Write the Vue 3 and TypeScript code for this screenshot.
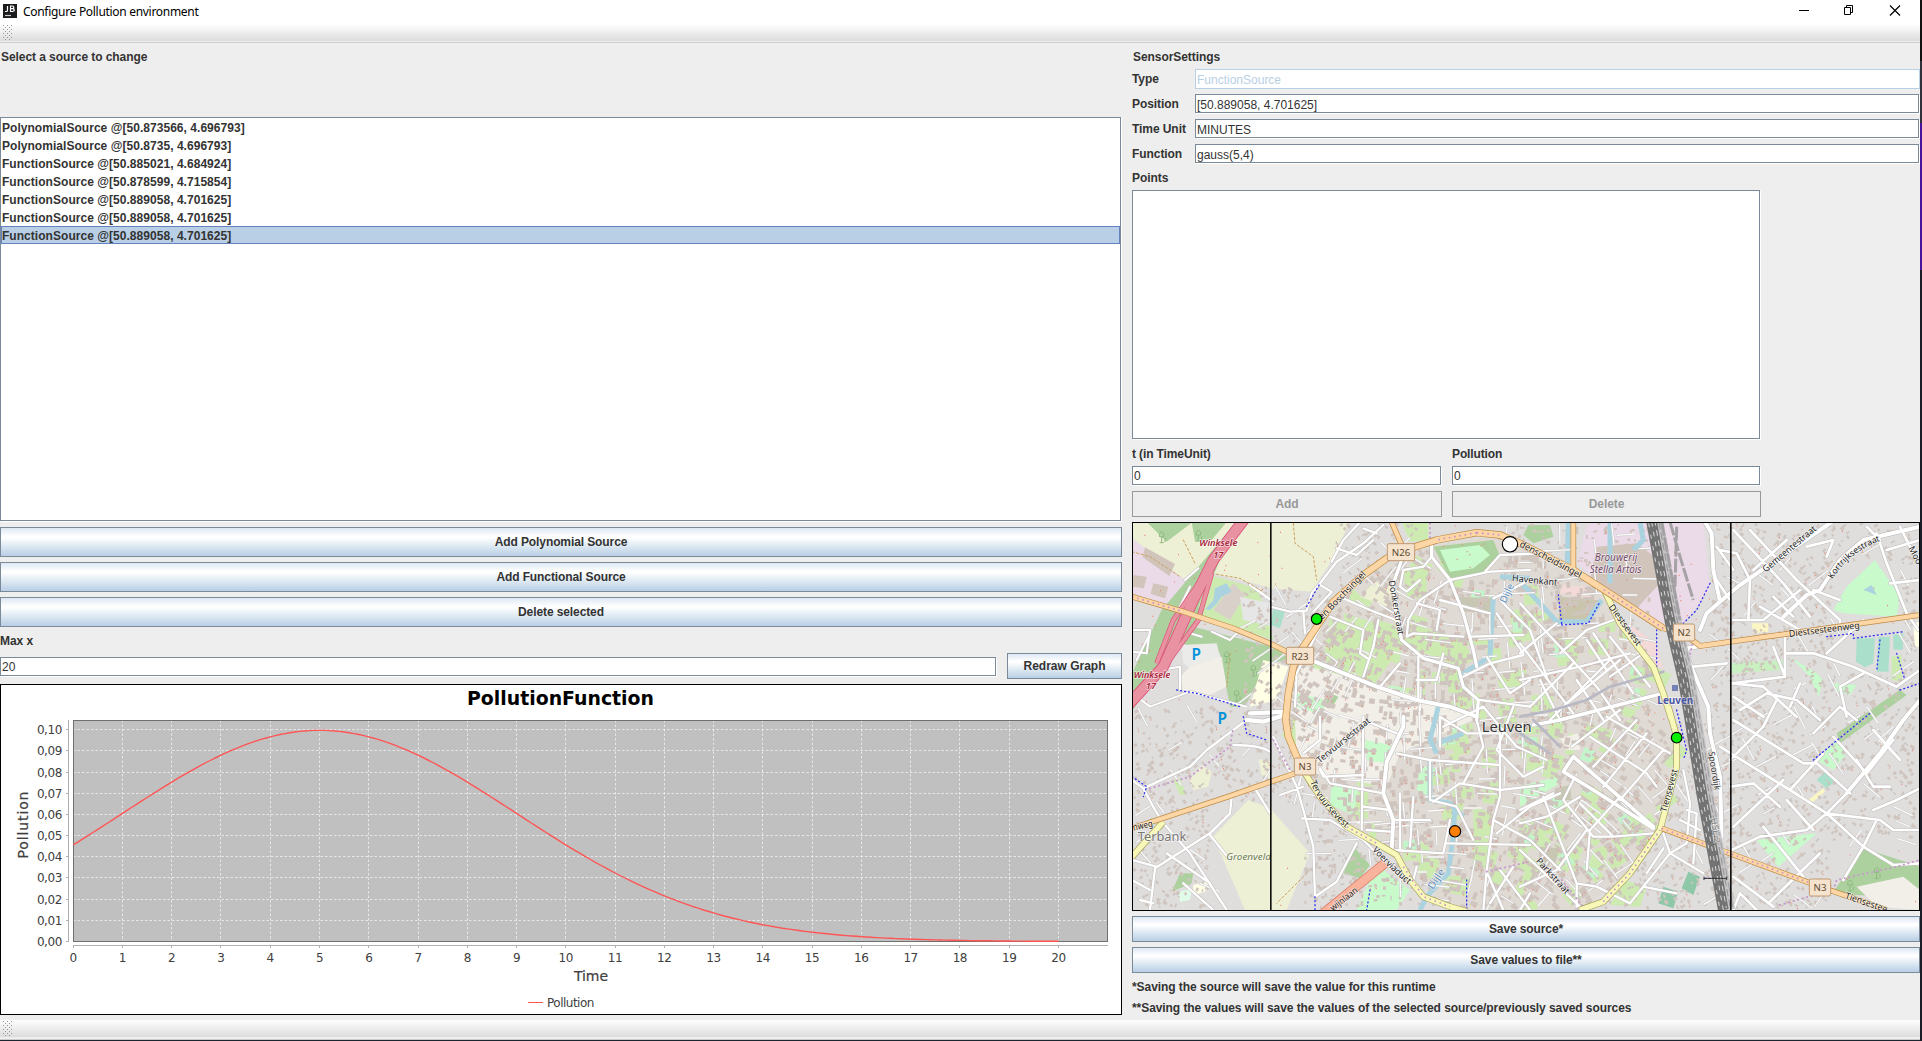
<script setup lang="ts">
interface Area { fill: string; pts: string }
interface Street { d: string; w: number }
interface Label { text: string; x: number; y: number; rot?: number; size: number; fill: string; kind?: string; len?: number }
interface Shield { text: string; x: number; y: number; w: number }

const sources: string[] = [
  'PolynomialSource @[50.873566, 4.696793]',
  'PolynomialSource @[50.8735, 4.696793]',
  'FunctionSource @[50.885021, 4.684924]',
  'FunctionSource @[50.878599, 4.715854]',
  'FunctionSource @[50.889058, 4.701625]',
  'FunctionSource @[50.889058, 4.701625]',
  'FunctionSource @[50.889058, 4.701625]',
]
const selected = 6
const sourceButtons = ['Add Polynomial Source', 'Add Functional Source', 'Delete selected']
const fields = [
  { label: 'Type', value: 'FunctionSource', disabled: true },
  { label: 'Position', value: '[50.889058, 4.701625]', disabled: false },
  { label: 'Time Unit', value: 'MINUTES', disabled: false },
  { label: 'Function', value: 'gauss(5,4)', disabled: false },
]

/* toolbar grip: staggered single-pixel dots */
let gripDots = ''
for (let r = 0; r < 8; r++) {
  for (let c = 0; c < 3; c++) {
    const x = c * 4 + (r % 2) * 2
    if (x < 10) gripDots += `M${x} ${r * 2}h1v1h-1z`
  }
}

/* chart */
const px = (t: number): number => 73.2 + t * 49.26
const py = (p: number): number => 257.5 - p * 2117
const xTicks = Array.from({ length: 21 }, (_, i) => i)
const yTicks = Array.from({ length: 11 }, (_, i) => i)
const snap = (n: number): number => Math.floor(n) + 0.5
const gauss = (t: number): number => Math.exp(-((t - 5) ** 2) / 32) / (4 * Math.sqrt(2 * Math.PI))
const curve = Array.from({ length: 201 }, (_, i) => `${px(i / 10).toFixed(1)},${py(gauss(i / 10)).toFixed(1)}`).join(' ')
const yLabel = (i: number): string => (i / 100).toFixed(2).replace('.', ',')

/* map: three units per pixel */
const areas: Area[] = [
  { fill: '#eef0d5', pts: '6,6 660,6 600,130 545,215 420,205 370,190 245,160 165,180 6,55' },
  { fill: '#add19e', pts: '50,6 188,6 110,65' },
  { fill: '#add19e', pts: '185,6 290,6 245,60 195,65' },
  { fill: '#ebdbe8', pts: '6,55 165,180 130,270 60,255 6,235' },
  { fill: '#d0c4bb', pts: '45,82 135,132 118,168 38,112' },
  { fill: '#d0c4bb', pts: '10,165 50,170 42,205 8,200' },
  { fill: '#d0c4bb', pts: '70,190 115,200 105,235 62,222' },
  { fill: '#add19e', pts: '320,6 205,140 95,270 6,460 6,575 80,460 190,320 240,190' },
  { fill: '#cdebb0', pts: '240,165 380,205 400,250 430,360 215,290 205,260' },
  { fill: '#d9d0c9', pts: '310,190 345,225 300,300 250,270' },
  { fill: '#aad3df', pts: '255,205 290,190 305,215 275,230 262,250 240,270 225,268 250,240' },
  { fill: '#e7e6e6', pts: '330,230 420,250 430,320 340,300' },
  { fill: '#aadfca', pts: '430,262 465,275 450,325 422,315' },
  { fill: '#add19e', pts: '190,320 440,385 480,420 410,430 345,560 300,560 270,400 150,370' },
  { fill: '#ebebe9', pts: '155,375 260,370 275,430 200,460 160,430' },
  { fill: '#f2efe9', pts: '180,440 275,410 290,500 230,530 160,520 150,470' },
  { fill: '#ffffe5', pts: '400,420 475,440 440,540 360,560' },
  { fill: '#f2efe9', pts: '490,430 740,490 1050,590 810,700 770,800 500,750' },
  { fill: '#cdebb0', pts: '600,290 690,320 745,300 840,330 800,400 735,490 580,420' },
  { fill: '#cdebb0', pts: '815,6 895,6 895,60 840,65' },
  { fill: '#cdebb0', pts: '840,310 1000,360 1030,420 990,440 860,390' },
  { fill: '#add19e', pts: '910,80 1090,60 1110,110 1060,160 960,175' },
  { fill: '#c8facc', pts: '930,90 1050,75 1080,105 1030,145 960,155' },
  { fill: '#eef0d5', pts: '735,185 790,200 770,260 690,230' },
  { fill: '#cdebb0', pts: '820,140 890,170 890,230 830,230' },
  { fill: '#cdebb0', pts: '640,280 740,310 720,370 650,330' },
  { fill: '#c7c7b4', pts: '980,230 1090,235 1080,275 990,275' },
  { fill: '#c8facc', pts: '500,520 590,540 575,585 500,560' },
  { fill: '#add19e', pts: '600,520 625,530 605,565 585,555' },
  { fill: '#c8facc', pts: '705,660 785,675 770,730 705,720' },
  { fill: '#c8facc', pts: '605,795 685,810 670,885 600,855' },
  { fill: '#cdebb0', pts: '1030,860 1090,880 1080,1040 1030,1050' },
  { fill: '#c8facc', pts: '870,740 905,740 900,830 860,810' },
  { fill: '#cdebb0', pts: '860,1010 930,1010 920,1080 870,1070' },
  { fill: '#add19e', pts: '675,985 720,1035 690,1075 640,1060' },
  { fill: '#add19e', pts: '150,1060 190,1060 185,1090 125,1115' },
  { fill: '#e0fbe7', pts: '145,1115 185,1108 180,1140 150,1145' },
  { fill: '#ffffe5', pts: '190,1095 235,1085 225,1115 190,1125' },
  { fill: '#eef0d5', pts: '250,950 355,840 420,865 540,1000 470,1170 345,1170' },
  { fill: '#eef0d5', pts: '180,780 215,735 245,755 235,800 190,810' },
  { fill: '#eef0d5', pts: '385,718 420,722 420,775 395,765' },
  { fill: '#cdebb0', pts: '130,780 150,775 168,825 150,825' },
  { fill: '#c8facc', pts: '760,1050 840,1110 800,1170 680,1170 720,1080' },
  { fill: '#ebdbe8', pts: '1375,6 1720,6 1740,210 1660,310 1600,320 1420,200 1340,130' },
  { fill: '#d0c4bb', pts: '1400,80 1520,70 1580,115 1590,190 1520,265 1380,180' },
  { fill: '#add19e', pts: '1195,15 1260,15 1270,50 1210,70 1180,45' },
  { fill: '#c8c5ac', pts: '1290,230 1405,240 1370,310 1285,310' },
  { fill: '#f3d9d8', pts: '1300,195 1370,200 1400,240 1290,220' },
  { fill: '#f3d9d8', pts: '1450,280 1580,370 1600,450 1570,430 1490,340' },
  { fill: '#c8facc', pts: '2110,270 2150,200 2235,120 2280,185 2310,230 2300,290 2140,280' },
  { fill: '#aad3df', pts: '2200,210 2225,195 2240,225 2215,215' },
  { fill: '#aae0cb', pts: '2180,355 2235,355 2230,430 2205,442 2178,425' },
  { fill: '#aae0cb', pts: '2245,350 2280,350 2275,455 2240,455' },
  { fill: '#aae0cb', pts: '2290,345 2320,340 2318,390 2290,388' },
  { fill: '#cdebb0', pts: '2285,410 2315,405 2315,485 2285,480' },
  { fill: '#c8f0c0', pts: '1805,430 1960,420 1955,450 1805,460' },
  { fill: '#add19e', pts: '2120,640 2310,510 2330,525 2130,670' },
  { fill: '#c8facc', pts: '1980,410 2060,460 2080,480 2065,530 2040,470' },
  { fill: '#c8facc', pts: '2110,490 2180,495 2160,525 2125,515' },
  { fill: '#c8facc', pts: '2060,720 2120,660 2150,700 2110,750' },
  { fill: '#aae0cb', pts: '2060,780 2085,753 2120,780 2090,805' },
  { fill: '#fbf6c4', pts: '2035,840 2080,805 2085,815 2050,845' },
  { fill: '#c8facc', pts: '1880,960 2060,940 1945,1040' },
  { fill: '#add19e', pts: '2110,1115 2200,985 2370,1040 2370,1130 2170,1125' },
  { fill: '#f2efe9', pts: '2180,1100 2320,1070 2370,1110 2370,1170 2240,1160' },
  { fill: '#fbf6c4', pts: '1865,310 1915,310 1915,335 1870,340' },
  { fill: '#ffffe5', pts: '2350,310 2370,305 2370,380 2355,380' },
  { fill: '#cdebb0', pts: '1480,1080 1550,1100 1530,1160 1440,1155' },
  { fill: '#cdebb0', pts: '1390,990 1440,970 1420,1050 1375,1040' },
  { fill: '#8ec8a8', pts: '1675,1055 1710,1070 1690,1125 1655,1105' },
  { fill: '#8ec8a8', pts: '1600,1100 1645,1115 1630,1165 1585,1150' },
  { fill: '#f2efe9', pts: '1290,655 1345,640 1350,690 1310,690' },
  { fill: '#c8facc', pts: '1170,800 1280,770 1290,790 1170,860' },
  { fill: '#c7c7b4', pts: '1275,805 1320,795 1325,840 1275,840' },
  { fill: '#c7c7b4', pts: '1230,980 1290,985 1275,1030 1225,1025' },
]

const ring: number[][] = [[560, 320], [700, 165], [840, 85], [1110, 45], [1330, 150], [1420, 205], [1590, 480], [1640, 700], [1590, 925], [1500, 1060], [1350, 1170], [960, 1170], [800, 1005], [650, 920], [530, 760], [475, 650], [480, 470]]
function inRing(x: number, y: number): boolean {
  let hit = false
  for (let i = 0, j = ring.length - 1; i < ring.length; j = i++) {
    const [ax, ay] = ring[i]
    const [bx, by] = ring[j]
    if (ay > y !== by > y && x < ((bx - ax) * (y - ay)) / (by - ay) + ax) hit = !hit
  }
  return hit
}
const ringPts = ring.map((p) => p.join(',')).join(' ')

let seed = 20
function rnd(): number {
  seed = (seed * 1664525 + 1013904223) % 4294967296
  return seed / 4294967296
}
function block(x: number, y: number, w: number, h: number, a: number): string {
  const c = Math.cos(a)
  const s = Math.sin(a)
  const p = (dx: number, dy: number): string => `${(x + dx * c - dy * s).toFixed(0)} ${(y + dx * s + dy * c).toFixed(0)}`
  return `M${p(-w, -h)}L${p(w, -h)}L${p(w, h)}L${p(-w, h)}Z`
}
const open = (x: number, y: number): boolean =>
  (x < 620 && y < 200 && x > 230) || (x > 240 && x < 520 && y > 850) || (x > 2100 && y > 960) || (x > 1560 && x < 1740 && y < 600) ||
  (x < 340 && y < 560) || (x > 900 && x < 1110 && y < 180) || (x > 2110 && x < 2310 && y > 120 && y < 460)
const tilt = (x: number, y: number): number => 0.6 * Math.sin(x / 310 + y / 420) + 0.5
let houses = ''
let gardens = ''
let mint = ''
let trees = ''
for (let i = 0; i < 5200; i++) {
  const x = 10 + rnd() * 2350
  const y = 10 + rnd() * 1155
  const city = inRing(x, y)
  const a = tilt(x, y) + (rnd() < 0.5 ? 0 : Math.PI / 2)
  const w = city ? 4 + rnd() * 9 : 3 + rnd() * 4
  const h = city ? 3 + rnd() * 5 : 2 + rnd() * 3
  if (!open(x, y)) houses += block(x, y, w, h, a)
  if (city && i % 14 === 0) gardens += block(x + 12, y + 10, 16 + rnd() * 24, 10 + rnd() * 18, a)
  if (city && i % 70 === 0) mint += block(x, y, 12 + rnd() * 18, 8 + rnd() * 12, a)
  if (i % 3 === 0 && (city || i % 5 === 0)) trees += `M${x.toFixed(0)} ${(y + 8).toFixed(0)}h3`
}

/* short side lanes, aligned with the surrounding blocks */
let lanes = ''
for (let gy = 30; gy < 1170; gy += 46) {
  for (let gx = 30; gx < 2360; gx += 52) {
    if (open(gx, gy) || rnd() < (inRing(gx, gy) ? 0.5 : 0.78)) continue
    const a = tilt(gx, gy) + (rnd() < 0.5 ? Math.PI / 2 : 0)
    const l = 18 + rnd() * 20
    const x = gx + rnd() * 16
    const y = gy + rnd() * 16
    lanes += `M${(x - Math.cos(a) * l).toFixed(0)} ${(y - Math.sin(a) * l).toFixed(0)}L${(x + Math.cos(a) * l).toFixed(0)} ${(y + Math.sin(a) * l).toFixed(0)}`
  }
}

const streets: Street[] = [
  { w: 7, d: 'M745 130L680 190 600 270 560 340M420 260L480 275 530 272 545 220 570 190 620 125 700 70 760 15M360 195L430 245M640 235L720 270 810 305M600 290L700 330 690 400 712 415M745 300L730 380 700 470M810 430L750 500M865 410V540M960 180L870 240 835 300 830 350 850 340 1000 350M560 340L490 480M500 470L495 560M570 195L605 215 550 275M605 125L640 60 690 6M620 85L680 105 730 60M520 275L525 340M700 25L740 40' },
  { w: 7, d: 'M960 180L1080 155 1200 150M1065 155L1110 105 1240 100M905 110L880 140 820 150 810 200 830 215 870 180M1090 235L1200 180M860 250L930 270 920 330M930 240L1080 280M1100 280L1180 400M1020 350L1180 345M1000 470L1080 430 1180 405M1050 540L1200 560M940 400L920 480 860 480M1070 410L1140 520 1200 480M1110 240L1200 330 1250 470' },
  { w: 6, d: 'M6 330L60 330 50 400 6 395M20 420L60 340M90 450L150 440 150 510M6 520L60 560 180 515 350 560M180 200L130 300M165 180L205 145M245 335L300 360 320 340M215 290L180 340 215 350' },
  { w: 7, d: 'M40 805L180 740 230 690 350 600M6 780L40 805 75 870 100 910 180 1000 290 1170M75 1045L240 940 300 880 305 830M310 675Q390 675 420 695M75 1045L60 1170M375 805L420 880M6 1080L60 1110M110 1000L240 1090M160 1090L250 1170M6 1020L80 1040M30 1140L70 1150M240 945L300 1020' },
  { w: 7, d: 'M430 650L500 800 520 870 550 980 555 1130 620 1085 680 970M515 895L600 900 700 960 760 1020M450 825L520 800M570 590V660L520 700M700 590L695 930M570 750L580 770 700 765M570 745L600 790 760 820M700 600L800 640M800 700L900 720 1110 735M790 900L900 900M790 990L940 1000 960 900M860 1040L850 1080 890 1130M710 930L780 935M700 860L780 870M810 820V990M850 830L840 980M900 720V840L980 860 1030 960M930 590V680' },
  { w: 7, d: 'M910 845L990 790 1050 800 1110 810 1240 795M1110 640V830L1090 900 1070 1050 1060 1170M950 970L1200 975M1090 900L1200 960 1290 1050M1100 940L1200 860 1290 820M1070 1055L1120 1170M1110 1050L1200 1170M1150 1040L1080 1150M1000 790L1060 680 1040 600M930 590L1010 640 1110 640M940 620L1060 560 1160 680 1250 720M1150 560L1100 690 1180 770 1240 740' },
  { w: 7, d: 'M1170 250L1290 380 1400 500 1470 600M1280 310L1230 350 1170 400M1290 400L1370 330 1450 300M1170 480L1350 440 1500 400M1390 340L1510 520M1440 350L1560 500M1370 360L1430 450M1170 370L1330 580M1200 560L1330 430M1260 600L1440 420M1470 420L1300 560M1290 600L1230 480M1340 480L1420 600M1540 400L1440 470' },
  { w: 7, d: 'M1325 680L1470 570M1380 650L1550 760 1580 800M1430 590L1620 700M1260 700L1170 640M1390 740L1520 600M1420 800L1550 640M1470 840L1600 690M1330 780L1300 840 1390 950 1450 950M1170 870L1270 820M1240 830L1340 1090 1340 1160M1350 850L1450 950 1570 940M1370 1050L1380 930 1470 830M1170 990L1350 1160M1170 1100L1280 1050 1370 930M1200 1120L1170 1170M1170 910L1250 890 1350 830M1340 1090L1400 1100 1500 1150' },
  { w: 7, d: 'M1660 750L1680 850 1670 970 1620 1000 1720 1060M1600 940L1620 1000 1500 1150M1650 900L1710 930M1670 870L1700 880 1690 1030M1540 1100L1640 1120M1600 985L1550 1060' },
  { w: 8, d: 'M1805 990L1890 950 2030 930 2090 880 2150 820M2090 880L2200 980 2290 1035 2370 1030M1810 600L2020 730M1770 680L1980 810 2090 880M2020 730L2060 730 2160 820M1800 800L1870 790 1950 860M1980 810L2080 700M2090 880L2250 900 2290 930 2370 930M2370 805L2300 840 2230 870M1900 920L2020 1070M1970 840L2050 930M1810 920L1960 780M1810 1070L1930 1160M1920 1145L2070 1000M2240 900L2200 980M2200 980L2140 1080M1800 720L1900 620 1940 540M2110 650L2210 760 2290 660M2050 640L2130 560 2180 600M2230 630L2310 720M2180 720L2230 800 2280 800M1810 1170L1830 1120 1880 1170' },
  { w: 8, d: 'M1855 300L1860 180 1820 100 1770 90M1810 300L1900 300 2010 210M1860 30L2000 180 2130 300V310M1970 60L1870 150M2030 80L2110 60 2090 110M2240 40L2270 130 2330 280 2365 330M2310 20L2350 100 2370 110M1930 380L1965 470 1805 490M1965 350V470M1965 400L2050 400 2170 440 2300 500 2370 450M1810 490L1900 500 2000 590M2200 460L2130 500 2150 590M1690 440L1790 430M1760 180L1800 240M1760 80L1810 150M1810 30L1960 190 2040 290M2050 210L2130 240M1890 260L2010 330M1930 230L1990 290M1830 570L1910 520 2000 540 2070 600M1810 530L1900 590M2010 490L1980 560M2090 400L2200 300M2270 90L2370 60M2280 190L2370 180M2210 20L2250 60' },
]
const bigStreets: Street[] = [
  { w: 12, d: 'M555 425L740 500 860 540 960 560 1040 590M820 590L820 620 770 725 760 820 790 900 785 990' },
  { w: 10, d: 'M815 120L790 190 800 300 815 360 880 415 985 445 1000 500 1045 540 1040 600' },
  { w: 10, d: 'M905 70V110L960 180 1000 280 1030 390 1040 440' },
  { w: 11, d: 'M1330 710L1570 920M1330 710L1300 755 1390 810 1570 925M1210 615L1290 600 1600 520' },
  { w: 12, d: 'M1710 378L1670 385 1675 420 1735 560 1740 640 1770 770 1775 950M1725 6L1745 40 1750 150 1770 245 1730 280 1710 330M1770 245L1830 195 1910 140 2070 30 2105 6' },
  { w: 12, d: 'M2370 20L2200 60 2130 120 2070 210 2030 225 1960 290M2150 820L2250 700 2320 600 2370 540' },
  { w: 13, d: 'M350 600L400 605 465 585M360 580L470 575' },
]
const water = 'M1315 6L1312 130M1170 185L1280 305 1370 305 1415 240M1090 230L1085 310 1080 410 985 470M925 560L900 660 920 700M900 720V840L960 850 1000 890M975 860L970 940 955 1060 890 1130 870 1170M920 670L1000 640M1110 170L1200 175M1440 6V190M1530 6L1540 60 1510 90'
const ringRoad = 'M1600 325L1415 205 1330 150 1170 70 1110 45 1040 38 920 60 840 85 770 115 700 165 610 245 560 320 520 380 490 440 475 520 467 600 475 650 500 710 520 745'
const primaries = 'M6 230L160 275 310 325 430 375 500 410M785 6L815 75M1330 6V150M1600 325L1660 340 1710 378 1910 350 2370 285M6 925L300 828 495 760M1595 925L2070 1100 2270 1170'
const secondaries = 'M525 760L570 830 650 920 740 970 800 1005 840 1080 880 1130 960 1160 1010 1175M1350 1170L1420 1145 1500 1060 1590 930 1640 740 1640 650 1615 560M1425 215L1470 310 1570 440 1600 520 1625 600M6 1010L100 905'
const rail = 'M1565 6L1600 200 1625 330 1660 480 1680 600 1715 820 1745 980 1780 1170'
const cyclePaths = 'M1295 310L1285 225M1295 315L1375 310 1410 245M1740 190L1700 270 1660 310M1580 440V330M1640 570L1670 690 1660 720M2090 350L2170 340 2170 355 2320 335M2250 360L2240 455M2300 400L2325 480M6 770L50 800 40 830M140 510L200 520 330 560M555 1130V1170M720 1110L710 1170M1010 1080V1170M2050 720L2110 670 2220 580M1725 1075H1790M2310 510L2370 490M530 260L570 190M340 590L350 640 410 660'
const footPaths = 'M60 805L180 770 300 680 310 620M430 660L480 750M1070 1055L1200 1025M2110 1110L2120 1080 2300 1040 2370 1020M1950 1155L2070 1120M1690 360L1660 490M1295 1080L1360 1160M900 10V80'
const fir: number[][] = [[370, 450], [320, 525], [290, 410], [95, 50], [205, 45], [2240, 1057], [2160, 1095]]

const shields: Shield[] = [
  { text: 'N26', x: 813, y: 97, w: 82 },
  { text: 'R23', x: 510, y: 408, w: 82 },
  { text: 'N3', x: 525, y: 740, w: 64 },
  { text: 'N2', x: 1662, y: 338, w: 64 },
  { text: 'N3', x: 2070, y: 1103, w: 64 },
]
const labels: Label[] = [
  { text: 'Winksele', x: 265, y: 78, size: 28, fill: '#a8253b', kind: 'exit', len: 114 },
  { text: '17', x: 265, y: 113, size: 28, fill: '#a8253b', kind: 'exit' },
  { text: 'Winksele', x: 66, y: 474, size: 28, fill: '#a8253b', kind: 'exit', len: 110 },
  { text: '17', x: 63, y: 508, size: 28, fill: '#a8253b', kind: 'exit' },
  { text: 'P', x: 199, y: 421, size: 46, fill: '#0092da', kind: 'park' },
  { text: 'P', x: 277, y: 611, size: 46, fill: '#0092da', kind: 'park' },
  { text: 'Brouwerij', x: 1458, y: 123, size: 30, fill: '#734a6c', kind: 'ital', len: 128 },
  { text: 'Stella Artois', x: 1457, y: 159, size: 30, fill: '#734a6c', kind: 'ital', len: 156 },
  { text: 'Leuven', x: 1130, y: 637, size: 41, fill: '#333', len: 150 },
  { text: 'Leuven', x: 1636, y: 551, size: 30, fill: '#4a55a5', kind: 'station', len: 108 },
  { text: 'Terbank', x: 96, y: 963, size: 37, fill: '#777', len: 146 },
  { text: 'Groenveld', x: 356, y: 1019, size: 27, fill: '#6b7a4a', kind: 'ital', len: 134 },
  { text: 'Donkerstraat', x: 790, y: 264, rot: 80, size: 27, fill: '#222', len: 164 },
  { text: 'Havenkant', x: 1213, y: 190, rot: 6, size: 28, fill: '#222', len: 136 },
  { text: 'Dijle', x: 1140, y: 224, rot: -65, size: 30, fill: '#5a8fc0', len: 60 },
  { text: 'Dijle', x: 927, y: 1082, rot: -57, size: 30, fill: '#5a8fc0', len: 66 },
  { text: 'en Boschsingel', x: 643, y: 232, rot: -46, size: 27, fill: '#222', len: 190 },
  { text: 'denscheidsingel', x: 1258, y: 126, rot: 28, size: 27, fill: '#222', len: 206 },
  { text: 'Diestsevest', x: 1478, y: 320, rot: 54, size: 27, fill: '#222', len: 146 },
  { text: 'Gemeentestraat', x: 1984, y: 94, rot: -40, size: 28, fill: '#222', len: 200 },
  { text: 'Diestsesteenweg', x: 2084, y: 338, rot: -7, size: 28, fill: '#222', len: 214 },
  { text: 'Moo', x: 2348, y: 110, rot: 62, size: 27, fill: '#222' },
  { text: 'Tervuursestraat', x: 646, y: 668, rot: -39, size: 27, fill: '#222', len: 198 },
  { text: 'Tiensevest', x: 1626, y: 814, rot: -75, size: 27, fill: '#222', len: 132 },
  { text: 'Spoordijk', x: 1744, y: 754, rot: 81, size: 27, fill: '#333', len: 118 },
  { text: 'HSL 2', x: 1748, y: 932, rot: 83, size: 27, fill: '#777', len: 76 },
  { text: 'Parkstraat', x: 1262, y: 1074, rot: 48, size: 27, fill: '#222', len: 136 },
  { text: 'Tiensestee', x: 2206, y: 1156, rot: 19, size: 27, fill: '#222', len: 132 },
  { text: 'wijnlaan', x: 647, y: 1144, rot: -38, size: 27, fill: '#222', len: 96 },
  { text: 'nweg', x: 40, y: 925, rot: -12, size: 27, fill: '#222', len: 60 },
]
const pins = [
  { x: 560, y: 297, r: 16, fill: '#00f000' },
  { x: 1140, y: 73, r: 23, fill: '#fff' },
  { x: 1640, y: 653, r: 16, fill: '#00f000' },
  { x: 975, y: 934, r: 17, fill: '#ff7f00' },
]
</script>

<template>
  <div class="screen">
    <div class="window">
      <header class="titlebar">
        <svg class="logo" width="14" height="14" viewBox="0 0 14 14">
          <rect width="14" height="14" fill="#1c1c1e" />
          <path d="M4.5 2v4.200q0 1.300-1.300 1.300H2M7.500 2v5.500h2q1.800 0 1.800-1.400T9.500 4.700h-2 1.800q1.500 0 1.500-1.300T9.300 2z" fill="none" stroke="#fff" stroke-width="1.200" />
          <path d="M2 11.500h6" stroke="#ccc" stroke-width="1.200" />
        </svg>
        <span class="caption">Configure Pollution environment</span>
        <svg class="controls" width="110" height="20" viewBox="0 0 110 20" fill="none" stroke="#000">
          <path d="M4 10.500h10" />
          <path d="M49.500 7.500h6v7h-6zM51.500 7.500v-2h6v7h-2" />
          <path d="M95 5.500l10 10M105 5.500l-10 10" stroke-width="1.200" />
        </svg>
      </header>
      <div class="toolbar"><svg class="grip" width="10" height="15"><path :d="gripDots" fill="#8f979e" /></svg></div>

      <main class="content">
        <section class="left">
          <div class="label intro">Select a source to change</div>
          <ul class="box list">
            <li v-for="(s, i) in sources" :key="i" :class="{ on: i === selected }">{{ s }}</li>
          </ul>
          <button v-for="b in sourceButtons" :key="b" class="btn tall">{{ b }}</button>
          <div class="label maxx">Max x</div>
          <div class="redraw">
            <div class="box input">20</div>
            <button class="btn">Redraw Graph</button>
          </div>
          <div class="chart">
            <svg width="1120" height="329" viewBox="1 1 1120 329">
              <text x="560.500" y="21" class="title" text-anchor="middle" textLength="187" lengthAdjust="spacingAndGlyphs">PollutionFunction</text>
              <rect x="73" y="36" width="1034" height="221" fill="#c0c0c0" />
              <g stroke="#fff" stroke-opacity=".62" stroke-dasharray="2.500 2">
                <line v-for="t in xTicks.slice(1)" :key="'gx' + t" :x1="snap(px(t))" :x2="snap(px(t))" y1="36" y2="257" />
                <line v-for="t in yTicks.slice(1)" :key="'gy' + t" x1="73" x2="1107" :y1="snap(py(t / 100))" :y2="snap(py(t / 100))" />
              </g>
              <rect x="73.500" y="36.500" width="1034" height="221" fill="none" stroke="#707070" />
              <polyline :points="curve" fill="none" stroke="#f55" stroke-width="1.400" />
              <g stroke="#b0b0b0">
                <path d="M68.500 36V258M73 261.500H1108" />
                <line v-for="t in xTicks" :key="'tx' + t" :x1="snap(px(t))" :x2="snap(px(t))" y1="262" y2="264" />
                <line v-for="t in yTicks" :key="'ty' + t" x1="66" x2="68" :y1="snap(py(t / 100))" :y2="snap(py(t / 100))" />
              </g>
              <g class="ticks">
                <text v-for="t in xTicks" :key="'lx' + t" :x="px(t)" y="278" text-anchor="middle">{{ t }}</text>
                <text v-for="t in yTicks" :key="'ly' + t" x="62" :y="py(t / 100) + 4.500" text-anchor="end">{{ yLabel(t) }}</text>
                <text x="547" y="322.500" textLength="47">Pollution</text>
              </g>
              <text class="axis" x="591" y="297" text-anchor="middle" textLength="34">Time</text>
              <text class="axis" transform="translate(27.500 141) rotate(-90)" text-anchor="middle" textLength="67">Pollution</text>
              <path d="M528 318.500h15" stroke="#f55" />
            </svg>
          </div>
        </section>

        <section class="right">
          <div class="label settings">SensorSettings</div>
          <div class="fields">
            <div v-for="f in fields" :key="f.label" class="row">
              <span class="label">{{ f.label }}</span>
              <div class="box input" :class="{ off: f.disabled }">{{ f.value }}</div>
            </div>
          </div>
          <div class="label points">Points</div>
          <div class="box pointlist"></div>
          <div class="pair">
            <div class="cell">
              <div class="label">t (in TimeUnit)</div>
              <div class="box input">0</div>
              <button class="btn off">Add</button>
            </div>
            <div class="cell">
              <div class="label">Pollution</div>
              <div class="box input">0</div>
              <button class="btn off">Delete</button>
            </div>
          </div>
          <div class="map">
            <svg width="786" height="387" viewBox="9 9 2358 1161">
              <rect width="2380" height="1180" fill="#dfdedd" />
              <polygon :points="ringPts" fill="#e0dad4" />
              <path :d="gardens" fill="#cdebb0" />
              <path :d="mint" fill="#c2f5cb" />
              <polygon v-for="(a, i) in areas" :key="'a' + i" :points="a.pts" :fill="a.fill" />
              <path :d="houses" fill="#cfc5be" />
              <path :d="trees" stroke="#ee8272" stroke-width="3.500" />
              <path :d="water" fill="none" stroke="#aad3df" stroke-width="15" stroke-linejoin="round" />
              <g fill="none" stroke-linejoin="round" stroke-linecap="round">
                <path :d="lanes" stroke="#c8c6c6" stroke-width="6.500" />
                <path :d="lanes" stroke="#fbfbfb" stroke-width="4" />
                <path v-for="(s, i) in streets" :key="'c' + i" :d="s.d" stroke="#c0bdbd" :stroke-width="s.w + 3" />
                <path v-for="(s, i) in bigStreets" :key="'d' + i" :d="s.d" stroke="#b8b5b5" :stroke-width="s.w + 3" />
                <path v-for="(s, i) in streets" :key="'s' + i" :d="s.d" stroke="#fff" :stroke-width="s.w" />
                <path v-for="(s, i) in bigStreets" :key="'b' + i" :d="s.d" stroke="#fff" :stroke-width="s.w" />
                <path d="M1170 590L1270 570 1370 540 1440 500 1600 455M1210 600L1290 680M1170 640L1260 700" stroke="#b9b9c6" stroke-width="8" />
                <path :d="footPaths" stroke="#c79bcc" stroke-width="6" stroke-dasharray="1 13" />
                <path :d="cyclePaths" stroke="#3434f0" stroke-width="4" stroke-dasharray="3 9" />
                <path d="M6 95L60 110 150 170M490 10L495 70 550 110 560 180M160 60L195 130M245 160L330 175 400 215M300 400L290 500M530 1060L440 1150" stroke="#cda15e" stroke-width="3" stroke-dasharray="7 7" />
              </g>
              <g fill="none" stroke-linejoin="round">
                <path d="M345 -5L250 120 190 240 100 440 -10 560" stroke="#dc4f78" stroke-width="34" />
                <path d="M220 170L130 300 80 430M245 160L205 300 90 460" stroke="#dc4f78" stroke-width="15" />
                <path d="M345 -5L250 120 190 240 100 440 -10 560" stroke="#e892a2" stroke-width="29" />
                <path d="M220 170L130 300 80 430M245 160L205 300 90 460" stroke="#e892a2" stroke-width="11" />
                <path :d="secondaries" stroke="#a8a060" stroke-width="20" />
                <path :d="secondaries" stroke="#f7f8b8" stroke-width="16" />
                <path d="M765 1030L580 1180" stroke="#d9765f" stroke-width="29" />
                <path d="M765 1030L580 1180" stroke="#f9b29c" stroke-width="25" />
                <path :d="primaries" stroke="#bd8a43" stroke-width="17" />
                <path :d="ringRoad" stroke="#bd8a43" stroke-width="22" />
                <path :d="primaries" stroke="#fcd6a4" stroke-width="13" />
                <path :d="ringRoad" stroke="#fcd6a4" stroke-width="18" />
                <path d="M1040 38L920 60M1040 38L1110 45M1600 325L1415 205M1595 925L2070 1100M6 230L160 275M1420 1145L1500 1060 1590 930M650 920L740 970M820 1040L880 1130 960 1160" stroke="#cc94c6" stroke-width="5" stroke-dasharray="5 11" />
                <path :d="rail" transform="translate(16 0)" stroke="#c4c2c4" stroke-width="38" />
                <path :d="rail" stroke="#737373" stroke-width="32" />
                <path d="M1620 6L1650 110 1690 240M1640 20L1635 200M1595 6L1650 300" stroke="#a5a2a5" stroke-width="9" stroke-dasharray="42 6" />
                <g stroke="#ededed" stroke-width="2.500">
                  <path :d="rail" stroke-dasharray="14 16" />
                  <path :d="rail" transform="translate(-9 4)" stroke-dasharray="12 23" />
                  <path :d="rail" transform="translate(9 -6)" stroke-dasharray="17 14" />
                  <path :d="rail" transform="translate(22 0)" stroke="#888" stroke-dasharray="22 10" />
                  <path :d="rail" transform="translate(30 0)" stroke="#999" stroke-dasharray="30 14" />
                </g>
              </g>
              <path d="M1626 495h18v18h-18z" fill="#7582b4" />
              <path d="M1722 1070v10M1790 1070v10M1722 1075h68" stroke="#333" stroke-width="3" />
              <path v-for="(p, i) in fir" :key="'t' + i" :d="`M${p[0]} ${p[1]}v18m-6 0h12M${p[0] - 7} ${p[1]}q0-14 7-14t7 14zM${p[0] + 10} ${p[1] + 4}v12`" fill="none" stroke="#8dba80" stroke-width="3" />
              <g v-for="(s, i) in shields" :key="'n' + i">
                <rect :x="s.x - s.w / 2" :y="s.y - 26" :width="s.w" height="51" rx="5" fill="#f5e3cd" stroke="#c09a72" stroke-width="3" />
                <text :x="s.x" :y="s.y + 11" font-size="29" fill="#604a32" text-anchor="middle">{{ s.text }}</text>
              </g>
              <g class="names">
                <text v-for="(l, i) in labels" :key="'l' + i" :class="l.kind" :transform="`translate(${l.x} ${l.y}) rotate(${l.rot ?? 0})`" :font-size="l.size" :fill="l.fill" :textLength="l.len" lengthAdjust="spacingAndGlyphs" text-anchor="middle">{{ l.text }}</text>
                <path id="vest" d="M540 785Q570 862 672 945" fill="none" stroke="none" />
                <path id="viaduct" d="M726 990Q785 1055 870 1124" fill="none" stroke="none" />
                <path id="kort" d="M2108 178Q2160 84 2300 46" fill="none" stroke="none" />
                <text font-size="27" fill="#222"><textPath href="#vest">Tervuursevest</textPath></text>
                <text font-size="27" fill="#222"><textPath href="#viaduct">Voerviaduct</textPath></text>
                <text font-size="26" fill="#222"><textPath href="#kort">Kortrijksestraat</textPath></text>
              </g>
              <path d="M422.500 0V1180M1802.500 0V1180" stroke="#000" stroke-width="4.500" />
              <circle v-for="(p, i) in pins" :key="'p' + i" :cx="p.x" :cy="p.y" :r="p.r" :fill="p.fill" stroke="#000" stroke-width="3.500" />
            </svg>
          </div>
          <button class="btn save">Save source*</button>
          <button class="btn save">Save values to file**</button>
          <div class="label note">*Saving the source will save the value for this runtime</div>
          <div class="label note">**Saving the values will save the values of the selected source/previously saved sources</div>
        </section>
      </main>
      <div class="toolbar foot"><svg class="grip" width="10" height="15"><path :d="gripDots" fill="#8f979e" /></svg></div>
    </div>
    <div class="edge"></div>
  </div>
</template>

<style>
body { margin: 0; overflow: hidden; background: #1b2530; }
</style>

<style scoped>
.screen { display: flex; width: 1922px; height: 1041px; background: #1b2530; font: 12px "Liberation Sans", Arial, sans-serif; color: #333; }
.window { width: 1920px; height: 1040px; background: #eee; display: flex; flex-direction: column; }
.edge { width: 2px; height: 1041px; background: linear-gradient(#111 0 61px, #30303a 61px 123px, #45139c 123px 270px, #1a1c26 270px); }
.titlebar { height: 24px; background: #fff; display: flex; align-items: flex-start; color: #000; }
.logo { margin: 4px 6px 0 3px; }
.caption { font: 12px/23px "Noto Sans", "Open Sans", sans-serif; letter-spacing: -.3px; white-space: nowrap; }
.controls { margin-left: auto; margin-right: 15px; }
.toolbar { height: 17px; padding-bottom: 1px; background: linear-gradient(#fff, #dcdcdc) 0 0 / 100% 17px no-repeat; border-bottom: 1px solid #ccc; flex: none; }
.grip { display: block; margin-left: 3px; padding-top: 1px; }
.foot { margin-top: auto; height: 18px; }
.content { display: flex; gap: 10px; height: 977px; }
.left { width: 1122px; }
.right { width: 788px; }
.label { font-weight: bold; white-space: pre; letter-spacing: -.07px; }
.intro { height: 74px; line-height: 28px; padding-left: 1px; }
.box { box-sizing: border-box; background: #fff; border: 1px solid #7a8a99; box-shadow: 1px 1px 0 #fff; }
.list { margin: 0 0 6px; padding: 0; list-style: none; height: 404px; width: 1121px; font-weight: bold; letter-spacing: .04px; }
.list li { box-sizing: border-box; height: 18px; line-height: 20px; padding-left: 1px; }
.list li.on { background: #b8cfe5; box-shadow: inset 0 0 0 1px #6382bf; }
.btn { display: block; box-sizing: border-box; width: 100%; height: 26px; margin: 0; padding: 0; border: 1px solid #7a8a99; border-radius: 0; font: bold 12px "Liberation Sans", Arial, sans-serif; letter-spacing: -.1px; color: #333; background: linear-gradient(#dde8f3, #fff 30%, #fff 34%, #dce8f2 66%, #b8cfe5); }
.btn.tall { height: 30px; margin-bottom: 5px; }
.btn.off { background: #eee; border-color: #999; color: #999; }
.maxx { height: 21px; line-height: 18px; }
.redraw { display: flex; justify-content: space-between; align-items: center; height: 26px; margin-bottom: 5px; }
.redraw .input { width: 996px; }
.redraw .btn { width: 115px; letter-spacing: 0; }
.input { height: 19px; line-height: 19px; padding-left: 1px; white-space: pre; }
.chart { box-sizing: border-box; width: 1122px; height: 331px; border: 1px solid #000; background: #fff; }
.chart svg, .map svg { display: block; }
.title { font: bold 20px "DejaVu Sans", sans-serif; fill: #000; }
.ticks { font: 12px "DejaVu Sans", sans-serif; letter-spacing: -.4px; fill: #404040; }
.axis { font: 14px "DejaVu Sans", sans-serif; fill: #404040; stroke: #404040; stroke-width: .2px; }
.settings { height: 26px; line-height: 28px; padding-left: 1px; }
.fields { display: flex; flex-direction: column; gap: 6px; }
.row { display: flex; height: 19px; line-height: 21px; }
.row .label { width: 63px; }
.row .input { width: 724px; line-height: 20px; }
.input.off { height: 20px; width: 725px; border-color: #b8cfe5; color: #b8cfe5; box-shadow: none; }
.points { height: 27px; line-height: 30px; }
.pointlist { height: 249px; width: 628px; }
.pair { display: flex; gap: 10px; height: 83px; }
.cell { width: 310px; }
.cell .label { height: 27px; line-height: 30px; letter-spacing: -.12px; }
.cell .input { width: 309px; margin-bottom: 6px; }
.cell + .cell { width: 309px; }
.cell + .cell .input { width: 308px; }
.map { box-sizing: border-box; width: 788px; height: 389px; border: 1px solid #000; margin-bottom: 5px; font-family: "Noto Sans", sans-serif; overflow: hidden; }
.names text { paint-order: stroke; stroke: rgba(255, 255, 255, .65); stroke-width: 4px; }
.names .exit { font-style: italic; font-weight: 600; }
.names .ital { font-style: italic; }
.names .park { font-weight: 600; stroke: none; }
.names .station { font-weight: bold; }
.save { margin-bottom: 5px; }
.note { height: 21px; line-height: 20px; margin-top: -1px; }
.note + .note { margin-top: 0; }
</style>
